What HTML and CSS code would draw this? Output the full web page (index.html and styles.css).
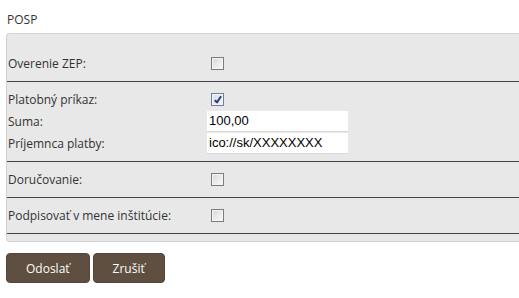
FILE: index.html
```html
<!DOCTYPE html>
<html lang="sk">
<head>
    <meta charset="UTF-8">
    <title>POSP</title>
    <link rel="stylesheet" href="styles.css">
</head>
<body>
    <div class="title">POSP</div>
    <form class="panel">
        <div class="section first">
            <div class="row">
                <label class="label">Overenie ZEP:</label>
                <div class="field"><input type="checkbox"></div>
            </div>
        </div>
        <div class="section">
            <div class="row">
                <label class="label">Platobný príkaz:</label>
                <div class="field"><input type="checkbox" checked></div>
            </div>
            <div class="row">
                <label class="label">Suma:</label>
                <div class="field"><input type="text" class="text" value="100,00"></div>
            </div>
            <div class="row">
                <label class="label">Príjemnca platby:</label>
                <div class="field"><input type="text" class="text" value="ico://sk/XXXXXXXX"></div>
            </div>
        </div>
        <div class="section">
            <div class="row">
                <label class="label">Doručovanie:</label>
                <div class="field"><input type="checkbox"></div>
            </div>
        </div>
        <div class="section">
            <div class="row">
                <label class="label">Podpisovať v mene inštitúcie:</label>
                <div class="field"><input type="checkbox"></div>
            </div>
        </div>
        <div class="tail"></div>
    </form>
    <div class="actions">
        <button class="btn">Odoslať</button>
        <button class="btn">Zrušiť</button>
    </div>
</body>
</html>
```

FILE: styles.css
```css
* {
    margin: 0;
    padding: 0;
    box-sizing: border-box;
}

body {
    font-family: 'Open Sans', sans-serif;
    font-size: 12px;
    color: #333;
    background: #fff;
    padding: 11px 0 0 6px;
    overflow: hidden;
}

.title {
    line-height: 18px;
    padding-left: 1px;
    margin-bottom: 4px;
}

.panel {
    background-color: #e8e8e8;
    border: 1px solid #d2d2d2;
    border-right: none;
    border-radius: 4px 0 0 4px;
}

.section {
    padding: 6px 0 7px;
    border-bottom: 1px solid #444;
}

.section.first {
    padding-top: 18px;
}

.row {
    display: flex;
    align-items: center;
    height: 22px;
}

.label {
    width: 200px;
    padding-left: 1px;
}

.field {
    display: flex;
    align-items: center;
}

.tail {
    height: 7px;
}

input[type="checkbox"] {
    appearance: none;
    -webkit-appearance: none;
    width: 13px;
    height: 13px;
    margin-left: 4px;
    border: 1px solid #7c7c7c;
    box-shadow: inset 0 0 0 1px #f4f4f4;
    background: linear-gradient(135deg, #d8d8d8, #fafafa);
    position: relative;
}

input[type="checkbox"]:checked {
    border-color: #6f7f9c;
    background: linear-gradient(135deg, #d6dcea, #f8f9fc);
}

input[type="checkbox"]:checked::after {
    content: "";
    position: absolute;
    left: 4px;
    top: 1px;
    width: 2px;
    height: 6px;
    border: solid #2b3f7a;
    border-width: 0 2px 2px 0;
    transform: rotate(35deg);
}

.text {
    width: 141px;
    height: 21px;
    border: none;
    border-bottom: 1px solid #d8d8d8;
    background: #fff;
    font-family: 'Liberation Sans', Arial, sans-serif;
    font-size: 13px;
    color: #000;
    padding: 0 2px;
    outline: none;
}

.actions {
    display: flex;
    gap: 3px;
    margin-top: 11px;
}

.btn {
    height: 30px;
    padding: 0 19px;
    background-color: #5e4f40;
    color: #fff;
    font-family: 'Open Sans', sans-serif;
    font-size: 12px;
    border: 1px solid #54473a;
    border-radius: 4px;
    cursor: pointer;
}

.btn:hover {
    background-color: #6c5c4c;
}
```
